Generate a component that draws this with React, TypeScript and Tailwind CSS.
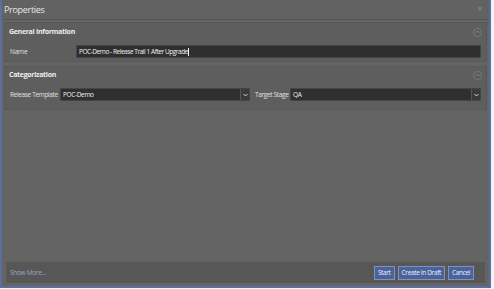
import React from "react";

function Collapse() {
  return (
    <div className="w-[9px] h-[9px] rounded-full border border-[#7a7a7a] bg-[#5a5a5a] flex items-center justify-center">
      <svg width="5" height="4" viewBox="0 0 5 4"><path d="M0.5 3 L2.5 1 L4.5 3" stroke="#8a8a8a" strokeWidth="1" fill="none" /></svg>
    </div>
  );
}

function Chevron() {
  return (
    <div className="w-[9px] h-[11px] flex items-center justify-center bg-[#3a3a3a] border-l border-[#555]">
      <svg width="5" height="4" viewBox="0 0 5 4"><path d="M0.5 1 L2.5 3 L4.5 1" stroke="#d0d0d0" strokeWidth="1" fill="none" /></svg>
    </div>
  );
}

export default function App() {
  const font = { fontFamily: '"Open Sans", "Noto Sans", sans-serif' };
  return (
    <div className="w-[494px] h-[289px] bg-[#f4f4f4] relative" style={font}>
      <div className="w-[491px] h-[288px] bg-[#646464] border-x-2 border-b-2 border-[#5a6f9c] flex flex-col">
        <div className="h-[20px] flex items-center justify-between px-[2px] border-b border-[#555] bg-[#626262]">
          <span className="text-[9px] text-[#e8e8e8] tracking-[-0.3px]">Properties</span>
          <span className="text-[7px] text-[#8a8a8a] mr-[4px]">✕</span>
        </div>
        <div className="flex-1 flex flex-col px-[2px] pt-[2px] gap-[4px]">
          <div className="bg-[#5e5e5e] border border-[#585858] h-[40px] flex flex-col">
            <div className="h-[18px] flex items-center justify-between px-[4px]">
              <span className="text-[7px] font-bold text-[#ededed] tracking-[-0.3px]">General Information</span>
              <Collapse />
            </div>
            <div className="flex items-center px-[5px] mt-[4px]">
              <span className="w-[66px] text-[6.5px] text-[#e0e0e0] tracking-[-0.2px]">Name</span>
              <div className="flex-1 h-[13px] bg-[#2f2f2f] border border-[#454545] rounded-[1px] flex items-center px-[2px]">
                <span className="text-[6.5px] text-[#f0f0f0] tracking-[-0.45px] whitespace-nowrap">POC-Demo - Release Trail 1 After Upgrade</span>
                <span className="w-px h-[8px] bg-white" />
              </div>
            </div>
          </div>
          <div className="bg-[#5e5e5e] border border-[#585858] h-[44px] flex flex-col">
            <div className="h-[16px] flex items-center justify-between px-[4px]">
              <span className="text-[7px] font-bold text-[#ededed] tracking-[-0.3px]">Categorization</span>
              <Collapse />
            </div>
            <div className="flex items-center px-[5px] mt-[5px] gap-[2px]">
              <span className="text-[6.5px] text-[#e0e0e0] tracking-[-0.35px] w-[48px] whitespace-nowrap">Release Template</span>
              <div className="w-[190px] h-[13px] bg-[#2f2f2f] border border-[#454545] rounded-[1px] flex items-center justify-between pl-[2px]">
                <span className="text-[6.5px] text-[#f0f0f0] tracking-[-0.35px]">POC-Demo</span>
                <Chevron />
              </div>
              <span className="text-[6.5px] text-[#e0e0e0] tracking-[-0.35px] w-[33px] ml-[3px] whitespace-nowrap">Target Stage</span>
              <div className="flex-1 h-[13px] bg-[#2f2f2f] border border-[#454545] rounded-[1px] flex items-center justify-between pl-[2px]">
                <span className="text-[6.5px] text-[#f0f0f0] tracking-[-0.25px]">QA</span>
                <Chevron />
              </div>
            </div>
          </div>
          <div className="flex-1" />
          <div className="h-[21px] bg-[#575757] mx-[2px] mb-[3px] flex items-center justify-between pl-[4px] pr-[11px]">
            <span className="text-[6.5px] text-[#98a6c4] tracking-[-0.3px]">Show More...</span>
            <div className="flex gap-[3px]">
              <button className="h-[14px] px-[3px] bg-[#4a6399] border border-[#7d92c0] text-[6.5px] text-[#eef] tracking-[-0.35px] whitespace-nowrap">Start</button>
              <button className="h-[14px] px-[3px] bg-[#4a6399] border border-[#7d92c0] text-[6.5px] text-[#eef] tracking-[-0.35px] whitespace-nowrap">Create In Draft</button>
              <button className="h-[14px] px-[3px] bg-[#4a6399] border border-[#7d92c0] text-[6.5px] text-[#eef] tracking-[-0.35px] whitespace-nowrap">Cancel</button>
            </div>
          </div>
        </div>
      </div>
    </div>
  );
}
